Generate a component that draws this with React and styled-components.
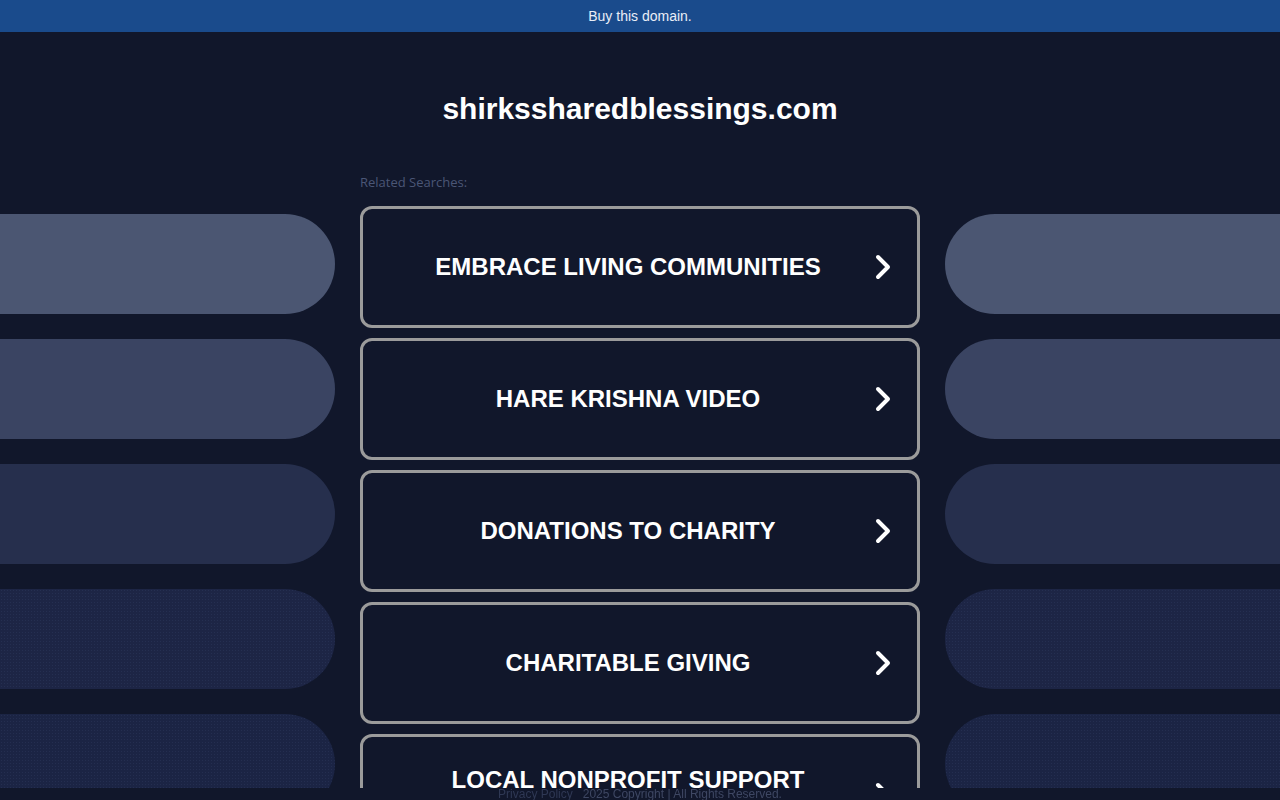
import React from "react";
import styled, { createGlobalStyle } from "styled-components";

const Global = createGlobalStyle`
  html, body { margin: 0; padding: 0; }
  body {
    background: #11172b;
    font-family: "Liberation Sans", Arial, sans-serif;
    overflow: hidden;
    height: 800px;
  }
`;

const TopBar = styled.a`
  display: flex;
  align-items: center;
  justify-content: center;
  height: 32px;
  background: #1a4b8c;
  color: #e9eef7;
  font-size: 14px;
  text-decoration: none;
`;

const Title = styled.h1`
  margin: 60px 0 0;
  text-align: center;
  color: #ffffff;
  font-size: 30px;
  line-height: 34px;
  font-weight: 700;
`;

const Main = styled.div`
  display: grid;
  grid-template-columns: 335px 560px 335px;
  column-gap: 25px;
  margin-top: 48px;
`;

const Side = styled.div`
  display: flex;
  flex-direction: column;
  gap: 25px;
  padding-top: 40px;
`;

const Pill = styled.div`
  height: 100px;
  background-color: ${(p) => p.$color};
  border-radius: ${(p) => (p.$side === "left" ? "0 50px 50px 0" : "50px 0 0 50px")};
  background-image: ${(p) =>
    p.$dots
      ? "radial-gradient(rgba(70,85,130,0.2) 0.6px, transparent 0.8px)"
      : "none"};
  background-size: 3px 3px;
`;

const Center = styled.div`
  display: flex;
  flex-direction: column;
`;

const Label = styled.div`
  font-family: "Open Sans", "Liberation Sans", sans-serif;
  font-size: 13px;
  line-height: 16px;
  color: #4b5676;
  margin-bottom: 16px;
`;

const Cards = styled.div`
  display: flex;
  flex-direction: column;
  gap: 10px;
`;

const Card = styled.a`
  position: relative;
  display: flex;
  align-items: center;
  justify-content: center;
  height: 122px;
  box-sizing: border-box;
  border: 3px solid #9b9b9b;
  border-radius: 12px;
  padding-right: 24px;
  color: #ffffff;
  font-size: 24px;
  font-weight: 700;
  text-decoration: none;
  text-transform: uppercase;
`;

const CardText = styled.span`
  line-height: 28px;
  padding-bottom: ${(p) => (p.$lift ? "30px" : "0")};
`;

const Arrow = styled.svg`
  position: absolute;
  right: 24px;
  top: 50%;
  transform: translateY(-50%);
  width: 20px;
  height: 28px;
`;

const Footer = styled.div`
  position: fixed;
  left: 0;
  right: 0;
  bottom: 0;
  height: 12px;
  background: #11172b;
  display: flex;
  justify-content: center;
  align-items: center;
  font-size: 12px;
  line-height: 12px;
  color: #3e4763;
  gap: 10px;
`;

const FooterLink = styled.span`
  color: #2f3854;
`;

const pillColors = ["#4b5672", "#3a4462", "#262f4d", "#1d2545", "#1b2444"];
const items = [
  { text: "Embrace Living Communities" },
  { text: "Hare Krishna Video" },
  { text: "Donations to Charity" },
  { text: "Charitable Giving" },
  { text: "Local Nonprofit Support", lift: true },
];

const Chevron = () => (
  <Arrow viewBox="0 0 20 28">
    <polyline
      points="5,4 15,14 5,24"
      fill="none"
      stroke="#ffffff"
      strokeWidth="4"
      strokeLinecap="round"
      strokeLinejoin="round"
    />
  </Arrow>
);

export default function App() {
  return (
    <>
      <Global />
      <TopBar href="#">Buy this domain.</TopBar>
      <Title>shirkssharedblessings.com</Title>
      <Main>
        <Side>
          {pillColors.map((c, i) => (
            <Pill key={i} $color={c} $side="left" $dots={i >= 3} />
          ))}
        </Side>
        <Center>
          <Label>Related Searches:</Label>
          <Cards>
            {items.map((it) => (
              <Card key={it.text} href="#">
                <CardText $lift={it.lift}>{it.text}</CardText>
                <Chevron />
              </Card>
            ))}
          </Cards>
        </Center>
        <Side>
          {pillColors.map((c, i) => (
            <Pill key={i} $color={c} $side="right" $dots={i >= 3} />
          ))}
        </Side>
      </Main>
      <Footer>
        <FooterLink>Privacy Policy</FooterLink>
        <span>2025 Copyright | All Rights Reserved.</span>
      </Footer>
    </>
  );
}
